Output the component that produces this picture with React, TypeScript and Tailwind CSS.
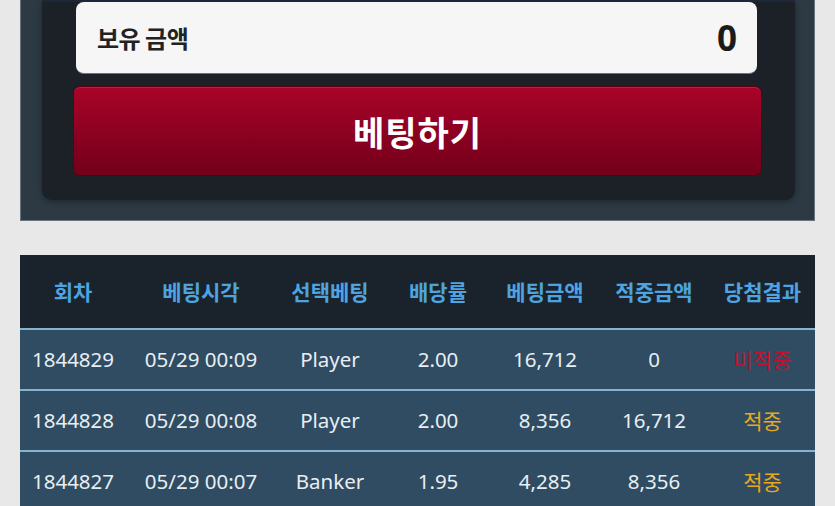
import React from 'react';

const rows = [
  { round: '1844829', time: '05/29 00:09', pick: 'Player', odds: '2.00', bet: '16,712', win: '0', result: '미적중', hit: false },
  { round: '1844828', time: '05/29 00:08', pick: 'Player', odds: '2.00', bet: '8,356', win: '16,712', result: '적중', hit: true },
  { round: '1844827', time: '05/29 00:07', pick: 'Banker', odds: '1.95', bet: '4,285', win: '8,356', result: '적중', hit: true },
];

const cols = ['w-[106px]', 'w-[150px]', 'w-[108px]', 'w-[108px]', 'w-[106px]', 'w-[112px]', 'w-[105px]'];
const heads = ['회차', '베팅시각', '선택베팅', '배당률', '베팅금액', '적중금액', '당첨결과'];

const App = () => {
  return (
    <div className="w-[835px] h-[506px] overflow-hidden bg-[#e8e8e8] flex flex-col font-['Noto_Sans','Noto_Sans_CJK_KR',sans-serif]">
      {/* Betting panel */}
      <div className="mx-[20px] h-[221px] shrink-0 bg-[#2d3a44] border-x border-b border-[#66757f] pl-[21px] pr-[19px]">
        <div className="h-[200px] bg-[#1b2126] rounded-b-[10px] shadow-[0_2px_6px_rgba(0,0,0,0.35)] pl-[31px] pr-[33px] border-t-2 border-[#1c2838]">
          <div className="ml-[3px] mr-[5px] h-[72px] bg-[#f6f6f6] rounded-[8px] border-b border-[#5c7690] flex items-center justify-between pl-[21px] pr-[20px]">
            <span className="text-[24px] font-bold text-[#222] tracking-[-0.5px] font-['Noto_Sans_CJK_KR',sans-serif]">보유 금액</span>
            <span className="text-[35px] font-bold text-[#1b1b1b] leading-none">0</span>
          </div>
          <button className="mt-[12px] w-full h-[90px] rounded-[7px] bg-gradient-to-b from-[#a90329] to-[#730019] border border-[#5c0010] shadow-[inset_0_1px_0_rgba(255,120,140,0.25)] flex items-center justify-center">
            <span className="text-[34px] font-bold text-white tracking-[1px] font-['Noto_Sans_CJK_KR',sans-serif]">베팅하기</span>
          </button>
        </div>
      </div>

      {/* History table */}
      <div className="mx-[20px] mt-[34px] flex flex-col">
        <div className="h-[75px] bg-[#1a232b] border-b-2 border-[#86b4cf] flex items-center">
          {heads.map((h, i) => (
            <div key={h} className={`${cols[i]} text-center text-[21px] font-bold text-[#4ea4e0] font-['Noto_Sans_CJK_KR',sans-serif]`}>
              {h}
            </div>
          ))}
        </div>
        {rows.map((r) => (
          <div key={r.round} className="h-[61px] bg-[#2f4c62] border-b-2 border-[#86b4cf] flex items-center text-[20.5px] text-[#e8eef3]">
            <div className={`${cols[0]} text-center`}>{r.round}</div>
            <div className={`${cols[1]} text-center`}>{r.time}</div>
            <div className={`${cols[2]} text-center`}>{r.pick}</div>
            <div className={`${cols[3]} text-center`}>{r.odds}</div>
            <div className={`${cols[4]} text-center`}>{r.bet}</div>
            <div className={`${cols[5]} text-center`}>{r.win}</div>
            <div className={`${cols[6]} text-center text-[21px] font-['Noto_Sans_CJK_KR',sans-serif] ${r.hit ? 'text-[#e8a820]' : 'text-[#c4102c]'}`}>
              {r.result}
            </div>
          </div>
        ))}
      </div>
    </div>
  );
};

export default App;
